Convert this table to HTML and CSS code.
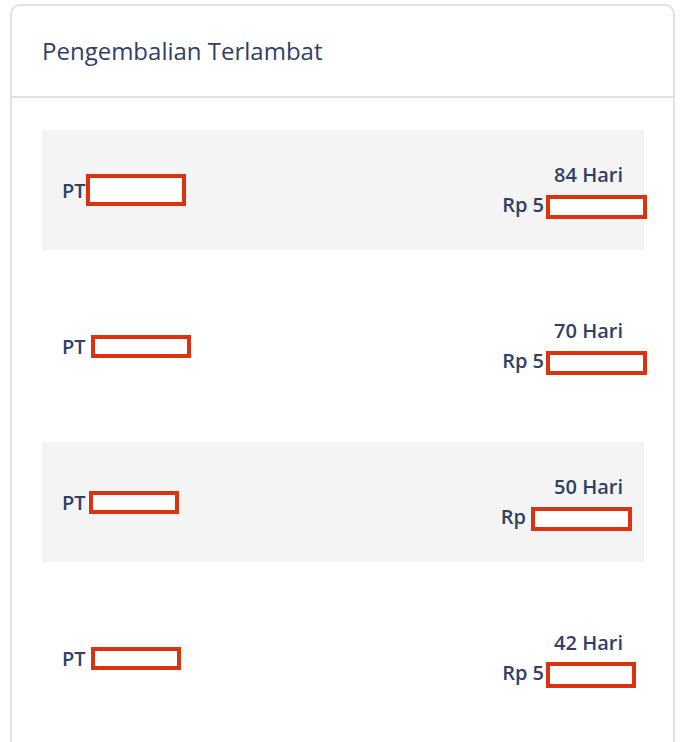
FILE: index.html
```html
<!DOCTYPE html>
<html lang="id">
<head>
<meta charset="utf-8">
<title>Pengembalian Terlambat</title>
<link rel="stylesheet" href="styles.css">
</head>
<body>
<div class="card">
  <div class="card-header">
    <h2 class="title">Pengembalian Terlambat</h2>
  </div>
  <div class="card-body">
    <div class="row shaded">
      <div class="left">PT<span class="redact" style="width:92px;height:24px;margin-left:0"></span></div>
      <div class="right">
        <div class="line">84 Hari</div>
        <div class="line">Rp 5<span class="redact" style="width:93px;height:16px;margin-left:2px;margin-right:-24px"></span></div>
      </div>
    </div>
    <div class="row">
      <div class="left">PT<span class="redact" style="width:92px;height:15px;margin-left:5px"></span></div>
      <div class="right">
        <div class="line">70 Hari</div>
        <div class="line">Rp 5<span class="redact" style="width:93px;height:16px;margin-left:2px;margin-right:-24px"></span></div>
      </div>
    </div>
    <div class="row shaded">
      <div class="left">PT<span class="redact" style="width:82px;height:15px;margin-left:3px"></span></div>
      <div class="right">
        <div class="line">50 Hari</div>
        <div class="line">Rp<span class="redact" style="width:93px;height:16px;margin-left:5px;margin-right:-9px"></span></div>
      </div>
    </div>
    <div class="row">
      <div class="left">PT<span class="redact" style="width:82px;height:15px;margin-left:5px"></span></div>
      <div class="right">
        <div class="line">42 Hari</div>
        <div class="line">Rp 5<span class="redact" style="width:82px;height:18px;margin-left:2px;margin-right:-13px"></span></div>
      </div>
    </div>
  </div>
</div>
</body>
</html>
```
FILE: styles.css
```css
html, body {
  margin: 0;
  padding: 0;
  background: #ffffff;
}
body {
  font-family: "Open Sans", "Noto Sans", sans-serif;
  color: #2f3f68;
}
.card {
  margin: 4px 13px 0 10px;
  border: 2px solid #e1e1e1;
  border-radius: 10px;
  background: #ffffff;
  height: 760px;
  box-sizing: border-box;
  overflow: hidden;
}
.card-header {
  height: 92px;
  box-sizing: border-box;
  padding: 0 30px;
  display: flex;
  align-items: center;
  border-bottom: 2px solid #e1e1e1;
}
.title {
  margin: 0;
  padding-bottom: 1px;
  font-size: 24px;
  font-weight: 400;
  line-height: 32px;
  color: #2f3f68;
}
.card-body {
  padding: 32px 29px 0 30px;
  display: flex;
  flex-direction: column;
  gap: 36px;
}
.row {
  height: 120px;
  display: flex;
  justify-content: space-between;
  align-items: center;
  padding: 0 21px 0 20px;
  font-size: 20px;
  font-weight: 600;
}
.row.shaded {
  background: #f4f4f4;
}
.left {
  display: flex;
  align-items: center;
}
.right {
  text-align: right;
}
.line {
  line-height: 30px;
}
.redact {
  display: inline-block;
  vertical-align: middle;
  border: 4px solid #d9330f;
  background: #ffffff;
}
```
